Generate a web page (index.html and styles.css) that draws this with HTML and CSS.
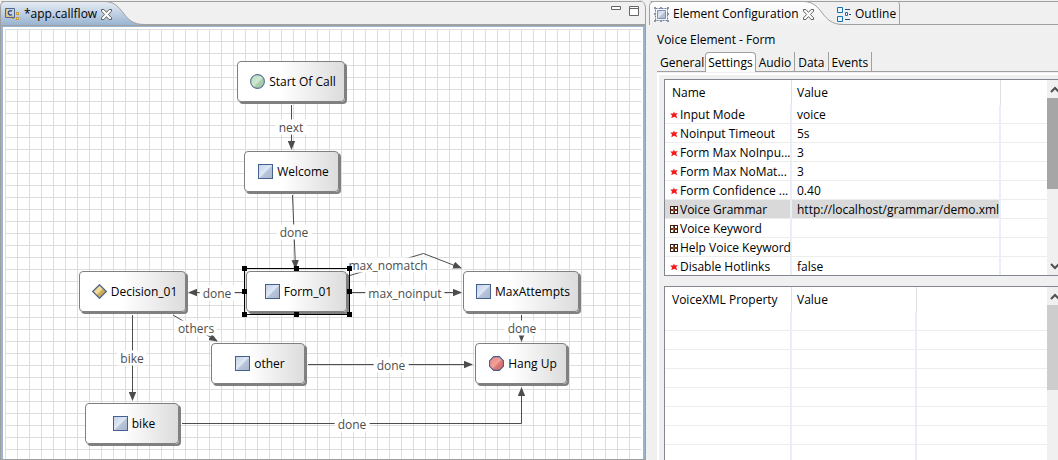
FILE: index.html
```html
<!DOCTYPE html>
<html lang="en">
<head>
<meta charset="utf-8">
<title>app.callflow</title>
<link rel="stylesheet" href="styles.css">
</head>
<body>
<svg class="defs" width="0" height="0" aria-hidden="true">
  <defs>
    <linearGradient id="tabBlue" x1="0" y1="0" x2="0" y2="1"><stop offset="0" stop-color="#e6edf5"/><stop offset="1" stop-color="#99b4d1"/></linearGradient>
    <linearGradient id="tabWhite" x1="0" y1="0" x2="0" y2="1"><stop offset="0" stop-color="#ffffff"/><stop offset="1" stop-color="#f0f0f0"/></linearGradient>
    <linearGradient id="blue" x1="0" y1="0" x2="1" y2="1"><stop offset="0" stop-color="#c3d0e6"/><stop offset=".48" stop-color="#dfe8f5"/><stop offset=".55" stop-color="#b7c4da"/><stop offset="1" stop-color="#a9b6cb"/></linearGradient>
    <linearGradient id="green" x1="0" y1="0" x2="1" y2="1"><stop offset="0" stop-color="#b5d9ba"/><stop offset=".5" stop-color="#cfe8d0"/><stop offset=".6" stop-color="#acd0ae"/><stop offset="1" stop-color="#9cc09f"/></linearGradient>
    <linearGradient id="red" x1="0" y1="0" x2="1" y2="1"><stop offset="0" stop-color="#e98580"/><stop offset=".5" stop-color="#f0a19b"/><stop offset=".6" stop-color="#df7872"/><stop offset="1" stop-color="#cf6a66"/></linearGradient>
    <linearGradient id="gold" x1="0" y1="0" x2="1" y2="1"><stop offset="0" stop-color="#e5c976"/><stop offset=".48" stop-color="#f2dfa0"/><stop offset=".55" stop-color="#d0b05c"/><stop offset="1" stop-color="#b89a50"/></linearGradient>
    <symbol id="square" viewBox="0 0 15 15"><rect x=".5" y=".5" width="14" height="14" fill="url(#blue)" stroke="#44608f"/></symbol>
    <symbol id="circle" viewBox="0 0 15 15"><circle cx="7.5" cy="7.5" r="6.9" fill="url(#green)" stroke="#5d7396" stroke-width="1.1"/></symbol>
    <symbol id="stop" viewBox="0 0 15 15"><path d="M4.700.600h5.600l4.100 4.100v5.600l-4.100 4.100H4.700L.600 10.300V4.700z" fill="url(#red)" stroke="#485c8c" stroke-width="1.1"/></symbol>
    <symbol id="diamond" viewBox="0 0 15 15"><path d="M7.5.7 14.3 7.5 7.5 14.3.7 7.5z" fill="url(#gold)" stroke="#56688a" stroke-width="1.3"/></symbol>
    <symbol id="star" viewBox="0 0 8 8"><path d="M4 .5 4.800 2.600 7.600 2 6.200 4.200 7.200 7.200 4.200 5.800 1.300 7.200 2 4.500.3 2.600 3 2.600z" fill="#f5191c"/></symbol>
    <symbol id="plus" viewBox="0 0 8 8"><path d="M0 0h8v8H0z" fill="#3a1d10"/><path d="M1 1h2v2H1zM5 1h2v2H5zM1 5h2v2H1zM5 5h2v2H5z" fill="#fff"/><path d="M3.5 1v6M1 4h6" stroke="#b4501e"/></symbol>
    <symbol id="close" viewBox="0 0 11 11"><path d="M.5.5h2.4l2.6 2.900L8.100.5h2.400v1.700L7.400 5.500l3.100 3.300v1.700H8.100L5.500 7.600l-2.600 2.900H.5V8.800l3.100-3.300L.5 2.200z" fill="#fff" stroke="#5f5f5f"/></symbol>
    <marker id="arrow" viewBox="0 0 9 8" refX="8" refY="4" markerWidth="9" markerHeight="8" markerUnits="userSpaceOnUse" orient="auto"><path d="M0 .3 9 4 0 7.700z" fill="#4d4d4d"/></marker>
  </defs>
</svg>

<main class="workbench">
  <section class="editor">
    <header class="bar">
      <div class="tab editor-tab">
        <svg class="tab-shape" width="146" height="25" viewBox="0 0 146 25"><path d="M.5 25V6.500Q.5 1.500 5.500 1.500H104C125 1.500 121 24.500 144 24.500V25z" fill="url(#tabBlue)"/><path d="M.5 25V6.500Q.5 1.500 5.500 1.500H104C125 1.500 121 24.500 144 24.500" fill="none" stroke="#a0a0a0"/></svg>
        <svg class="icon" width="15" height="14" viewBox="0 0 15 14"><path d="M.5 1.500h9v9h-9z" fill="#dfc27f" stroke="#526692"/><path d="M2 2h7v7H2z" fill="#c8cfdf"/><path d="M7 4.200C5.500 3 3.200 4 3.300 5.900S5.500 8.600 7 7.500" fill="none" stroke="#39517f" stroke-width="1.500"/><path d="M11.500 5.500h2v2h-2zM11.500 10.500h2v2h-2zM7 11.500h2" fill="#fff0b0" stroke="#c99522"/></svg>
        <span>*app.callflow</span>
        <button class="close" aria-label="Close app.callflow"><svg width="11" height="11"><use href="#close"/></svg></button>
      </div>
      <div class="window-buttons">
        <button aria-label="Minimize"><svg width="10" height="10" viewBox="0 0 10 10"><path d="M.5.500h9v3h-9z" fill="#fff" stroke="#666"/></svg></button>
        <button aria-label="Maximize"><svg width="10" height="10" viewBox="0 0 10 10"><path d="M.5.500h9v9h-9zM.5 2.500h9" fill="#fff" stroke="#666"/></svg></button>
      </div>
    </header>
    <div class="canvas">
      <svg class="edges" width="640" height="433" viewBox="3 27 640 433">
        <g fill="none" stroke="#4d4d4d">
          <path marker-end="url(#arrow)" d="M291.500 105V149"/>
          <path marker-end="url(#arrow)" d="M292.500 195 295.500 268"/>
          <path marker-end="url(#arrow)" d="M244 292.500H189"/>
          <path marker-end="url(#arrow)" d="M348 276 423.500 253.500 461 268"/>
          <path marker-end="url(#arrow)" d="M350 292.500H461"/>
          <path marker-end="url(#arrow)" d="M132.500 315V400"/>
          <path marker-end="url(#arrow)" d="M173 315 217 341"/>
          <path marker-end="url(#arrow)" d="M521.500 315V341"/>
          <path marker-end="url(#arrow)" d="M308 364.500H472"/>
          <path marker-end="url(#arrow)" d="M182 423.500H521.500V388"/>
        </g>
      </svg>
      <span class="edge-label" style="left:288px;top:100px">next</span>
      <span class="edge-label" style="left:291px;top:205px">done</span>
      <span class="edge-label" style="left:214px;top:266px">done</span>
      <span class="edge-label" style="left:385px;top:238px">max_nomatch</span>
      <span class="edge-label" style="left:402px;top:266px">max_noinput</span>
      <span class="edge-label" style="left:129px;top:331px">bike</span>
      <span class="edge-label" style="left:193px;top:301px">others</span>
      <span class="edge-label" style="left:519px;top:301px">done</span>
      <span class="edge-label" style="left:388px;top:338px">done</span>
      <span class="edge-label" style="left:349px;top:397px">done</span>

      <div class="node" style="left:234px;top:34px;width:108px"><svg width="15" height="15"><use href="#circle"/></svg>Start Of Call</div>
      <div class="node" style="left:241px;top:124px;width:95px"><svg width="15" height="15"><use href="#square"/></svg>Welcome</div>
      <div class="node" style="left:243px;top:244px;width:101px"><svg width="15" height="15"><use href="#square"/></svg>Form_01</div>
      <div class="node" style="left:76px;top:244px;width:107px"><svg width="15" height="15"><use href="#diamond"/></svg>Decision_01</div>
      <div class="node" style="left:460px;top:244px;width:116px"><svg width="15" height="15"><use href="#square"/></svg>MaxAttempts</div>
      <div class="node" style="left:208px;top:316px;width:94px"><svg width="15" height="15"><use href="#square"/></svg>other</div>
      <div class="node" style="left:472px;top:316px;width:92px"><svg width="15" height="15"><use href="#stop"/></svg>Hang Up</div>
      <div class="node" style="left:82px;top:376px;width:94px"><svg width="15" height="15"><use href="#square"/></svg>bike</div>
      <svg class="selection" width="110" height="51" viewBox="0 0 110 51"><path d="M2.500 2.500h105v46H2.500z" fill="none" stroke="#000"/><path d="M0 0h5v5H0zM52 0h5v5h-5zM105 0h5v5h-5zM0 23h5v5H0zM105 23h5v5h-5zM0 46h5v5H0zM52 46h5v5h-5zM105 46h5v5h-5z"/></svg>
    </div>
  </section>

  <section class="panel">
    <header class="bar">
      <div class="tab panel-tab">
        <svg class="tab-shape" width="196" height="25" viewBox="0 0 196 25"><path d="M.5 25V6.500Q.5 1.500 5.500 1.500H154C175 1.500 171 24.500 194 24.500V25z" fill="url(#tabWhite)"/><path d="M.5 25V6.500Q.5 1.500 5.500 1.500H154C175 1.500 171 24.500 194 24.500" fill="none" stroke="#a0a0a0"/></svg>
        <svg class="icon" width="15" height="15" viewBox="0 0 15 15"><path d="M1.500 1.500h12v12h-12z" fill="none" stroke="#697c9e" stroke-dasharray="2 1"/><path d="M0 0h2v2H0zM6 0h2v2H6zM13 0h2v2h-2zM0 6h2v2H0zM13 6h2v2h-2zM0 13h2v2H0zM6 13h2v2H6zM13 13h2v2h-2z" fill="#8795ae"/><path d="M3.500 3.500h8v8h-8z" fill="url(#blue)" stroke="#7f93b9"/></svg>
        <span>Element Configuration</span>
        <button class="close" aria-label="Close Element Configuration"><svg width="11" height="11"><use href="#close"/></svg></button>
      </div>
      <button class="outline-tab"><svg width="14" height="15" viewBox="0 0 14 15"><path d="M.5.500h5v5h-5zM.5 9.500h5v5h-5zM8.500 5.500h2v3h-2z" fill="#e9f6ff" stroke="#1670ae"/><path d="M8 2.500h5M12 7.500h2M8 12.500h5" stroke="#1d4f80"/></svg>Outline</button>
    </header>
    <h1>Voice Element - Form</h1>
    <nav class="subtabs">
      <button>General</button><button class="current">Settings</button><button>Audio</button><button>Data</button><button>Events</button>
    </nav>
    <div class="content">
      <div class="grid-box settings">
        <table>
          <colgroup><col class="c-name"><col class="c-value"><col></colgroup>
          <thead><tr><th>Name</th><th>Value</th><th></th></tr></thead>
          <tbody>
            <tr><td><svg width="8" height="8"><use href="#star"/></svg>Input Mode</td><td>voice</td><td></td></tr>
            <tr><td><svg width="8" height="8"><use href="#star"/></svg>Noinput Timeout</td><td>5s</td><td></td></tr>
            <tr><td><svg width="8" height="8"><use href="#star"/></svg>Form Max NoInpu...</td><td>3</td><td></td></tr>
            <tr><td><svg width="8" height="8"><use href="#star"/></svg>Form Max NoMat...</td><td>3</td><td></td></tr>
            <tr><td><svg width="8" height="8"><use href="#star"/></svg>Form Confidence ...</td><td>0.40</td><td></td></tr>
            <tr class="selected"><td><svg width="8" height="8"><use href="#plus"/></svg>Voice Grammar</td><td>http://localhost/grammar/demo.xml</td><td></td></tr>
            <tr><td><svg width="8" height="8"><use href="#plus"/></svg>Voice Keyword</td><td></td><td></td></tr>
            <tr><td><svg width="8" height="8"><use href="#plus"/></svg>Help Voice Keyword</td><td></td><td></td></tr>
            <tr><td><svg width="8" height="8"><use href="#star"/></svg>Disable Hotlinks</td><td>false</td><td></td></tr>
          </tbody>
        </table>
        <div class="scroll">
          <svg width="11" height="18" viewBox="0 0 11 18"><path d="m4 12 4-4 4 4" fill="none" stroke="#505050" stroke-width="2"/></svg>
          <div class="thumb dark"></div>
          <svg class="down" width="11" height="18" viewBox="0 0 11 18"><path d="m4 7 4 4 4-4" fill="none" stroke="#505050" stroke-width="2"/></svg>
        </div>
      </div>
      <div class="grid-box properties">
        <table>
          <colgroup><col class="c-name"><col class="c-prop"><col></colgroup>
          <thead><tr><th>VoiceXML Property</th><th>Value</th><th></th></tr></thead>
          <tbody>
            <tr><td></td><td></td><td></td></tr><tr><td></td><td></td><td></td></tr><tr><td></td><td></td><td></td></tr><tr><td></td><td></td><td></td></tr>
            <tr><td></td><td></td><td></td></tr><tr><td></td><td></td><td></td></tr><tr><td></td><td></td><td></td></tr><tr><td></td><td></td><td></td></tr>
          </tbody>
        </table>
        <div class="scroll">
          <svg width="11" height="18" viewBox="0 0 11 18"><path d="m4 12 4-4 4 4" fill="none" stroke="#505050" stroke-width="2"/></svg>
          <div class="thumb"></div>
        </div>
      </div>
    </div>
  </section>
</main>
</body>
</html>
```

FILE: styles.css
```css
* { box-sizing: border-box; }

body {
  margin: 0;
  height: 100vh;
  overflow: hidden;
  background: #f0f0f0;
  color: #000;
  font: 12px/16px "Open Sans", "Noto Sans", sans-serif;
}

button {
  margin: 0;
  padding: 0;
  border: 0;
  background: none;
  color: inherit;
  font: inherit;
}

svg { display: block; flex: none; }
.defs { position: absolute; }

.workbench {
  display: grid;
  grid-template-columns: 646fr 409fr;
  gap: 3px;
  height: 100%;
}

.editor, .panel {
  display: flex;
  flex-direction: column;
  min-width: 0;
  min-height: 0;
}

.bar {
  display: flex;
  flex: none;
  height: 25px;
  background: linear-gradient(#a0a0a0, #a0a0a0) 0 1px / 100% 1px no-repeat;
  border-bottom: 1px solid #a0a0a0;
}

.tab {
  position: relative;
  display: flex;
  align-items: center;
  height: 25px;
  padding-top: 3px;
  white-space: nowrap;
}

.tab > * { position: relative; }
.tab > .tab-shape { position: absolute; left: 0; top: 0; }
.tab .icon { margin-right: 4px; }
.close { margin-left: 4px; }

/* editor */
.editor .bar { border-radius: 5px 8px 0 0; border-right: 1px solid #a0a0a0; }
.editor-tab { padding-left: 5px; }
.window-buttons {
  display: flex;
  gap: 8px;
  margin-left: auto;
  padding: 6px 6px 0 0;
  align-items: flex-start;
}

.canvas {
  position: relative;
  flex: 1;
  min-height: 0;
  overflow: hidden;
  border: solid #99b4d1;
  border-width: 2px 3px 0 3px;
  box-shadow: inset 2px 2px #fff, inset -2px 0 #fff;
  background-color: #fff;
  background-image: linear-gradient(90deg, #dedede 1px, transparent 1px), linear-gradient(#dedede 1px, transparent 1px);
  background-size: 12px 12px;
  background-position: 2px 2px;
  outline: 1px solid #a0a0a0;
  outline-offset: -1px;
}

.edges { position: absolute; left: 0; top: 0; }

.edge-label {
  position: absolute;
  padding: 0 3px;
  height: 15px;
  line-height: 15px;
  background: #fff;
  color: #4d4d4d;
  white-space: nowrap;
  transform: translate(-50%, -50%);
}

.node {
  position: absolute;
  display: flex;
  align-items: center;
  justify-content: center;
  gap: 4px;
  height: 41px;
  padding-left: 4px;
  border: 1px solid #808080;
  border-radius: 4px;
  background: linear-gradient(90deg, #fff 40%, #dcdcdc);
  box-shadow: 2px 2px #808080;
  white-space: nowrap;
}

.selection { position: absolute; left: 239px; top: 239px; }

/* configuration panel */
.panel-tab { padding-left: 5px; width: 186px; }
.panel .bar { border-radius: 5px 0 0 0; }
.outline-tab {
  display: flex;
  align-items: center;
  gap: 4px;
  padding: 3px 3px 0 2px;
  height: 24px;
  border-top: 1px solid transparent;
  border-right: 1px solid #a0a0a0;
  border-radius: 0 5px 0 0;
}

h1 {
  margin: 7px 8px 4px;
  font: inherit;
}

.subtabs {
  display: flex;
  flex: none;
  height: 20px;
  margin-left: 8px;
  background: linear-gradient(#a0a0a0, #a0a0a0) 0 19px / 100% 1px no-repeat;
}

.subtabs button {
  padding: 1px 3px 0;
  border-right: 1px solid #a0a0a0;
}

.subtabs button:first-child { padding-right: 1px; border-right: 0; }
.subtabs .current {
  border: 1px solid #a0a0a0;
  border-bottom: 0;
  border-radius: 4px 4px 0 0;
  background: #fff;
  padding: 0 2px;
}

.content {
  display: flex;
  flex-direction: column;
  flex: 1;
  gap: 10px;
  min-height: 0;
  margin: 1px 0 0 8px;
  padding: 4px 0 0 5px;
  border: solid #fff;
  border-width: 2px 0 0 2px;
}

.grid-box {
  display: flex;
  flex: none;
  min-height: 0;
  overflow: hidden;
  background: #fff;
  border: 1px solid #828790;
  border-right: 0;
}

.settings { height: 197px; }
.properties { flex: 1; border-bottom: 0; }

table {
  flex: 1;
  width: 100%;
  min-width: 0;
  table-layout: fixed;
  border-collapse: separate;
  border-spacing: 0;
  align-self: flex-start;
}

.c-name { width: 127px; }
.c-value { width: 209px; }
.c-prop { width: 125px; }

th {
  height: 25px;
  padding: 0 7px;
  border-right: 1px solid #e0e0e0;
  font-weight: 400;
  text-align: left;
  white-space: nowrap;
}

th:nth-child(2) { padding-left: 5px; }

td {
  height: 19px;
  padding: 2px 5px 0;
  border-right: 2px solid #e9eef8;
  border-bottom: 1px solid #ededed;
  line-height: 16px;
  white-space: nowrap;
}

td:first-child { padding-right: 0; }
th:last-child, td:last-child { border-right: 0; }
td svg { display: inline-block; margin-right: 2px; }
.selected td:not(:last-child) { background: #d9d9d9; }

.scroll {
  display: flex;
  flex-direction: column;
  flex: none;
  width: 11px;
  background: #f0f0f0;
}

.thumb { height: 85px; background: #cdcdcd; }
.thumb.dark { height: 91px; background: #a6a6a6; }
.down { margin-top: auto; }
```
